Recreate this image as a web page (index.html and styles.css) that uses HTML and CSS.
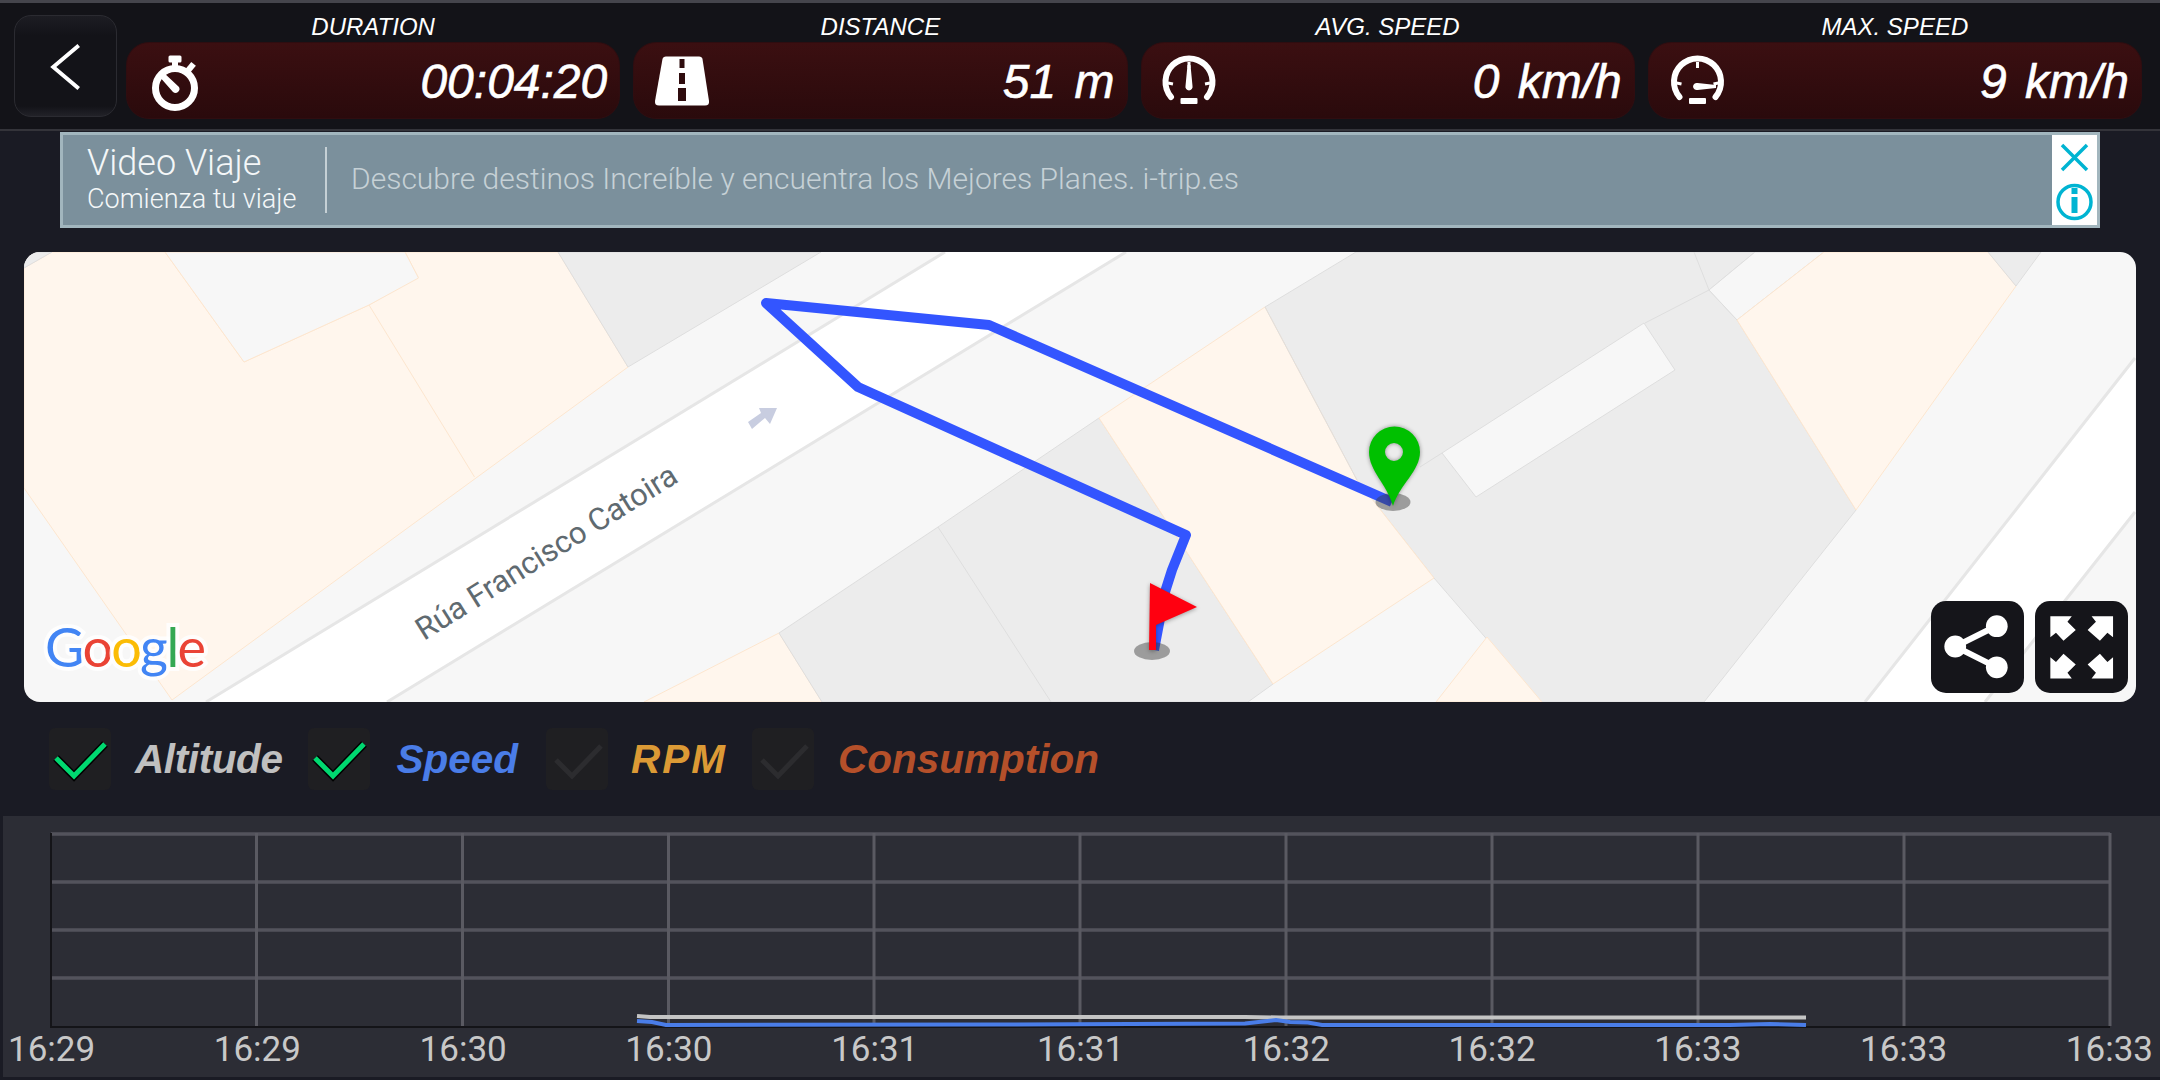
FILE: index.html
```html
<!DOCTYPE html>
<html lang="en">
<head>
    <meta charset="UTF-8">
    <meta name="viewport" content="width=device-width, initial-scale=1.0">
    <title>Trip Details</title>
    <link rel="stylesheet" href="styles.css">
</head>
<body>
    <header class="topbar">
        <button class="back-btn">
            <svg class="back-icon" viewBox="0 0 103 102"><path d="M65 30 L39 52 L65 74"/></svg>
        </button>
        <div class="stats">
            <div class="stat">
                <div class="stat-label">DURATION</div>
                <div class="stat-card">
                    <svg class="stat-icon" viewBox="0 0 60 60">
                        <circle class="ico-line" cx="30" cy="37" r="19.5"/>
                        <rect class="ico-fill" x="23.5" y="4.5" width="13" height="7" rx="1.5"/>
                        <rect class="ico-fill" x="27" y="10" width="6" height="8"/>
                        <rect class="ico-fill" x="43" y="12" width="6" height="9" transform="rotate(40 46 16)"/>
                        <path class="ico-fill" d="M13 24 L18 21 L34 36 A4 4 0 0 1 28 41 Z"/>
                    </svg>
                    <div class="stat-value">00:04:20</div>
                </div>
            </div>
            <div class="stat">
                <div class="stat-label">DISTANCE</div>
                <div class="stat-card">
                    <svg class="stat-icon" viewBox="0 0 60 60">
                        <path class="ico-fill" d="M14 5.500 H47 Q50 5.500 50.500 8 L57 50 Q57.500 54.500 53 54.500 H7 Q2.500 54.500 3 50 L10.500 8 Q11 5.500 14 5.500 Z"/>
                        <path class="ico-cut" d="M27.500 8 H32.500 V17 H27.500 Z M27 22 H33 V33 H27 Z M26 37 H34 V50 H26 Z"/>
                    </svg>
                    <div class="stat-value">51 m</div>
                </div>
            </div>
            <div class="stat">
                <div class="stat-label">AVG. SPEED</div>
                <div class="stat-card">
                    <svg class="stat-icon" viewBox="0 0 60 60">
                        <path class="ico-line thin" d="M11 46 A23.500 23.500 0 1 1 47 46"/>
                        <path class="ico-line tick" d="M29 11 V17 M8 32 L13 33 M50 32 L45 33"/>
                        <path class="ico-fill" d="M27.500 14 H30.500 L32.500 35 A3.600 3.600 0 1 1 25.500 35 Z"/>
                        <rect class="ico-fill" x="20.500" y="47" width="17" height="6" rx="1"/>
                    </svg>
                    <div class="stat-value">0 km/h</div>
                </div>
            </div>
            <div class="stat">
                <div class="stat-label">MAX. SPEED</div>
                <div class="stat-card">
                    <svg class="stat-icon" viewBox="0 0 60 60">
                        <path class="ico-line thin" d="M12.500 46 A23.500 23.500 0 1 1 48.500 46"/>
                        <path class="ico-line tick" d="M30.500 11 V17 M9.500 32 L14.500 33 M51.500 32 L46.500 33"/>
                        <path class="ico-fill" d="M49 34 V37 L30.500 39 A3.600 3.600 0 1 1 30.500 32 Z"/>
                        <rect class="ico-fill" x="22" y="47" width="17" height="6" rx="1"/>
                    </svg>
                    <div class="stat-value">9 km/h</div>
                </div>
            </div>
        </div>
    </header>

    <section class="ad">
        <div class="ad-title">
            <div class="ad-name">Video Viaje</div>
            <div class="ad-sub">Comienza tu viaje</div>
        </div>
        <div class="ad-text">Descubre destinos Increíble y encuentra los Mejores Planes. i-trip.es</div>
        <div class="ad-close">
            <svg viewBox="0 0 45 90" class="ad-icons">
                <path class="ad-stroke" d="M10 10 L35 35 M35 10 L10 35"/>
                <circle class="ad-stroke" cx="22.500" cy="67" r="16.500"/>
                <rect class="ad-i" x="19.500" y="62" width="6" height="16"/>
                <rect class="ad-i" x="19.500" y="53" width="6" height="6"/>
            </svg>
        </div>
    </section>

    <section class="map">
        <svg class="map-canvas" viewBox="24 252 2112 450">
            <!-- blocks -->
            <polygon class="beige" points="24,268 52,252 165,252 244,362 369,305 418,277 405,252 558,252 628,367 172,700 24,488"/>
            <polygon class="pale" points="165,252 405,252 418.500,278 369,305 244,362"/>
            <path class="beige-line" d="M369 305 L474.500 477"/>
            <polygon class="grey" points="24,268 52,252 24,252"/>
            <polygon class="grey" points="558,252 821,252 628,367"/>
            <polygon class="beige" points="644,702 779,633 822,702"/>
            <polygon class="grey" points="779,633 938,527 1099,418 1273,684 1248,702 822,702"/>
            <path class="grey-line" d="M938 527 L1051 702"/>
            <polygon class="grey" points="1265,307 1356,252 1755,252 1709,290 1737,320 1856,510 1704,702 1541,702 1434,578 1357,480"/>
            <polygon class="beige" points="1099,418 1265,307 1357,480 1434,578 1273,684"/>
            <path class="grey-line" d="M1265 307 L1357 480 M1694 252 L1709 290 L1645 323 M1442 453 L1420 467"/>
            <polygon class="pale-grey" points="1442,453 1644,323 1675,370 1476,497"/>
            <polygon class="pale-grey" points="1755,252 1824,252 1737,320 1709,290"/>
            <polygon class="beige" points="1824,252 1988,252 2016,286 1856,510 1737,320"/>
            <polygon class="grey" points="1988,252 2041,252 2016,286"/>
            <polygon class="beige" points="1487,637 1436,702 1542,702"/>
            <!-- roads -->
            <polygon class="road" points="206,702 945,252 1126,252 387,702"/>
            <polygon class="road" points="1865,702 2135,358 2135,512 1985,702"/>
            <path class="road-edge" d="M206 702 L945 252 M387 702 L1126 252 M1865 702 L2135 358 M1985 702 L2135 512"/>
            <polygon class="road-arrow" points="759,408 777,408 770,424 765,418 752,429 748,422 761,413"/>
            <text class="road-name" transform="translate(552 561) rotate(-32)" text-anchor="middle">Rúa Francisco Catoira</text>
            <text class="google" x="45" y="667" textLength="161" lengthAdjust="spacing"><tspan class="g-blue">G</tspan><tspan class="g-red">o</tspan><tspan class="g-yellow">o</tspan><tspan class="g-blue">g</tspan><tspan class="g-green">l</tspan><tspan class="g-red">e</tspan></text>
            <!-- route and markers -->
            <polyline class="route" points="1392,502 989,325 766,303 858,387 1186,535 1172,570 1165,592 1154,650"/>
            <ellipse class="marker-shadow" cx="1393" cy="502" rx="17.500" ry="9"/>
            <ellipse class="marker-shadow" cx="1152" cy="651" rx="18" ry="9"/>
            <path class="pin" fill-rule="evenodd" d="M1393 506 C1387 484 1369 471 1369 452 A25.500 25.500 0 0 1 1420 452 C1420 471 1400 484 1393 506 Z M1394 443 A9 9 0 1 0 1394 461 A9 9 0 1 0 1394 443 Z"/>
            <path class="flag" d="M1150 583 L1197 607 L1156 625 L1156 650 L1149 650 Z"/>
        </svg>
        <div class="map-buttons">
            <button class="map-btn">
                <svg viewBox="0 0 93 93">
                    <path class="share-line" d="M66 25 L24 46 L66 67"/>
                    <circle class="ico-fill" cx="24" cy="46" r="11"/>
                    <circle class="ico-fill" cx="66" cy="25.500" r="11"/>
                    <circle class="ico-fill" cx="66" cy="67" r="11"/>
                </svg>
            </button>
            <button class="map-btn">
                <svg viewBox="0 0 93 93">
                    <polygon class="ico-fill" points="15,15.300 36.700,15.300 32.300,21 40.700,29.300 28.300,40.300 20.700,32 15,36.700"/>
                    <polygon class="ico-fill" transform="matrix(-1 0 0 1 93.400 0)" points="15,15.300 36.700,15.300 32.300,21 40.700,29.300 28.300,40.300 20.700,32 15,36.700"/>
                    <polygon class="ico-fill" transform="matrix(1 0 0 -1 0 93.600)" points="15,15.300 36.700,15.300 32.300,21 40.700,29.300 28.300,40.300 20.700,32 15,36.700"/>
                    <polygon class="ico-fill" transform="matrix(-1 0 0 -1 93.400 93.600)" points="15,15.300 36.700,15.300 32.300,21 40.700,29.300 28.300,40.300 20.700,32 15,36.700"/>
                </svg>
            </button>
        </div>
    </section>

    <section class="legend">
        <div class="check on"><svg viewBox="0 0 62 62"><polyline class="check-back" points="7,30 25,48 56,16"/><polyline class="check-mark" points="7,30 25,48 56,16"/></svg></div>
        <span class="legend-label altitude">Altitude</span>
        <div class="check on"><svg viewBox="0 0 62 62"><polyline class="check-back" points="7,30 25,48 56,16"/><polyline class="check-mark" points="7,30 25,48 56,16"/></svg></div>
        <span class="legend-label speed">Speed</span>
        <div class="check"><svg viewBox="0 0 62 62"><polyline class="check-mark" points="10,32 26,48 55,18"/></svg></div>
        <span class="legend-label rpm">RPM</span>
        <div class="check"><svg viewBox="0 0 62 62"><polyline class="check-mark" points="10,32 26,48 55,18"/></svg></div>
        <span class="legend-label consumption">Consumption</span>
    </section>

    <section class="chart">
        <svg class="chart-plot" viewBox="3 816 2157 215">
            <path class="grid-h" d="M51 834 H2110 M51 882 H2110 M51 930 H2110 M51 978 H2110"/>
            <path class="grid-v" d="M256.500 833 V1026 M462.500 833 V1026 M668.500 833 V1026 M874 833 V1026 M1080 833 V1026 M1286 833 V1026 M1492 833 V1026 M1698 833 V1026 M1904 833 V1026 M2110 833 V1026"/>
            <path class="axis" d="M51 833 V1027 H2110"/>
            <polyline class="line-alt" points="637,1016 650,1017 1245,1017 1280,1017.500 1806,1017.500"/>
            <polyline class="line-speed" points="637,1021 652,1022 666,1025 1000,1024.500 1245,1023.500 1276,1020 1290,1022 1308,1022.500 1322,1025 1730,1025 1770,1024 1806,1025"/>
        </svg>
        <div class="chart-labels">
            <span>16:29</span><span>16:29</span><span>16:30</span><span>16:30</span><span>16:31</span><span>16:31</span><span>16:32</span><span>16:32</span><span>16:33</span><span>16:33</span><span>16:33</span>
        </div>
    </section>
</body>
</html>
```

FILE: styles.css
```css
body {
    background-color: #1a1b24;
    margin: 0;
    width: 2160px;
    height: 1080px;
    overflow: hidden;
    font-family: 'Liberation Sans', Arial, sans-serif;
}

/* top bar */
.topbar {
    display: flex;
    align-items: flex-start;
    box-sizing: border-box;
    height: 131px;
    padding: 12px 18px 0 14px;
    background-color: #131318;
    border-top: 3px solid #45454c;
    border-bottom: 2px solid #34343a;
}

.back-btn {
    flex: none;
    width: 103px;
    height: 102px;
    margin-right: 9px;
    padding: 0;
    background: linear-gradient(#1d1d23, #131318 20%, #131318 90%, #222228);
    border: 1px solid #2b2b31;
    border-radius: 17px;
}

.back-icon {
    display: block;
    width: 100%;
    height: 100%;
    fill: none;
    stroke: #fff;
    stroke-width: 4;
}

.stats {
    flex: 1;
    display: grid;
    grid-template-columns: repeat(4, 1fr);
    gap: 13px;
    margin-top: -1px;
}

.stat-label {
    height: 28px;
    line-height: 26px;
    text-align: center;
    color: #fff;
    font-size: 24px;
    font-style: italic;
}

.stat-card {
    display: flex;
    align-items: center;
    justify-content: space-between;
    box-sizing: border-box;
    height: 77px;
    padding: 0 12px 0 18px;
    background: linear-gradient(#3b0f11, #2a0a0c);
    border: 1px solid #2f0d10;
    border-radius: 23px;
}

.stat-icon {
    width: 60px;
    height: 60px;
}

.stat-value {
    padding-top: 2px;
    color: #fff;
    font-size: 48px;
    font-style: italic;
    word-spacing: 5px;
    -webkit-text-stroke: 0.6px #fff;
}

.ico-fill { fill: #fff; }
.ico-cut { fill: #2f0c0e; }

.ico-line {
    fill: none;
    stroke: #fff;
    stroke-width: 7;
}

.ico-line.thin { stroke-width: 6; stroke-linecap: round; }
.ico-line.tick { stroke-width: 3; }

/* ad banner */
.ad {
    display: flex;
    align-items: center;
    box-sizing: border-box;
    height: 96px;
    margin: 1px 60px 0;
    padding-left: 24px;
    padding-right: 0;
    background-color: #7b909c;
    border: 3px solid #a2b6be;
    font-family: Roboto, sans-serif;
    font-weight: 300;
}

.ad-title {
    flex: none;
    width: 238px;
    height: 66px;
    border-right: 2px solid #c5d0d5;
    color: #f4f7f8;
}

.ad-name {
    font-size: 36px;
    line-height: 40px;
    margin-top: -4px;
}

.ad-sub {
    font-size: 27px;
    line-height: 32px;
}

.ad-text {
    flex: 1;
    margin-top: -3px;
    padding-left: 24px;
    color: #c6d1d6;
    font-size: 30px;
}

.ad-close {
    flex: none;
    width: 45px;
    height: 90px;
    background-color: #fff;
}

.ad-icons {
    display: block;
    width: 45px;
    height: 90px;
}

.ad-stroke {
    fill: none;
    stroke: #00b4d2;
    stroke-width: 3.500;
}

.ad-i { fill: #00b4d2; }

/* map */
.map {
    position: relative;
    height: 450px;
    margin: 24px 24px 0;
    border-radius: 16px;
    overflow: hidden;
    background-color: #f7f7f7;
}

.map-canvas {
    display: block;
    width: 100%;
    height: 100%;
}

.beige { fill: #fff6ed; stroke: #fde6cf; stroke-width: 1; }
.beige-line { stroke: #fde6cf; stroke-width: 1; fill: none; }
.pale { fill: #f7f7f7; stroke: #fde6cf; stroke-width: 1; }
.pale-grey { fill: #f7f7f7; stroke: #dedede; stroke-width: 1; }
.grey { fill: #ececec; stroke: #dedede; stroke-width: 1; }
.grey-line { stroke: #dedede; stroke-width: 1; fill: none; }
.road { fill: #fff; }
.road-edge { stroke: #e6e6e6; stroke-width: 3; fill: none; }
.road-arrow { fill: #c8cde0; }

.road-name {
    fill: #5f6a70;
    font-family: Roboto, sans-serif;
    font-size: 31px;
}

.google {
    font-family: Lato, sans-serif;
    font-size: 54px;
    font-weight: 400;
    stroke: rgba(255, 255, 255, 0.8);
    stroke-width: 8;
    paint-order: stroke;
}

.g-blue { fill: #4285f4; }
.g-red { fill: #ea4335; }
.g-yellow { fill: #fbbc05; }
.g-green { fill: #34a853; }

.marker-shadow { fill: rgba(60, 60, 60, 0.45); }

.route {
    fill: none;
    stroke: #3355ff;
    stroke-width: 10;
    stroke-linejoin: round;
}

.pin { fill: #00c000; filter: drop-shadow(0 0 2px rgba(0, 0, 0, 0.4)); }
.flag { fill: #ff0010; filter: drop-shadow(0 1px 2px rgba(0, 0, 0, 0.35)); }

.map-buttons {
    position: absolute;
    right: 8px;
    bottom: 9px;
    display: flex;
    gap: 11px;
}

.map-btn {
    width: 93px;
    height: 92px;
    padding: 0;
    border: none;
    border-radius: 15px;
    background-color: #15151a;
}

.map-btn svg {
    display: block;
    width: 100%;
    height: 100%;
}

.share-line {
    fill: none;
    stroke: #fff;
    stroke-width: 6;
}

/* legend */
.legend {
    display: flex;
    align-items: center;
    height: 114px;
    padding-left: 49px;
}

.check {
    flex: none;
    width: 62px;
    height: 62px;
    background-color: #1f1f22;
    border-radius: 6px;
}

.check svg {
    display: block;
    width: 100%;
    height: 100%;
}

.check-back { fill: none; stroke: #000; stroke-width: 8; }
.check-mark { fill: none; stroke: #2c2c2f; stroke-width: 5; }
.check.on .check-mark { stroke: #00d870; }

.legend-label {
    margin: 0 25px 0 24px;
    font-size: 40.5px;
    font-style: italic;
    font-weight: bold;
}

.altitude { color: #c0c0c0; letter-spacing: -0.4px; }
.speed { color: #4a7de8; margin-left: 27px; margin-right: 28px; }
.rpm { color: #dc9a35; letter-spacing: 2px; margin-left: 23px; }
.consumption { color: #b5502a; }

/* chart */
.chart {
    height: 261px;
    margin-left: 3px;
    background-color: #2c2d35;
}

.chart-plot {
    display: block;
    width: 2157px;
    height: 215px;
}

.grid-h { stroke: #53535c; stroke-width: 3.500; fill: none; }
.grid-v { stroke: #5a5a62; stroke-width: 3; fill: none; }
.axis { stroke: #141418; stroke-width: 2; fill: none; }
.line-alt { stroke: #c4c4c4; stroke-width: 4; fill: none; }
.line-speed { stroke: #4a7de8; stroke-width: 4; fill: none; }

.chart-labels {
    display: flex;
    justify-content: space-between;
    padding: 1px 7px 0 5px;
    color: #c8c8c8;
    font-family: Roboto, sans-serif;
    font-size: 35px;
    font-weight: 400;
    line-height: 36px;
}
```
